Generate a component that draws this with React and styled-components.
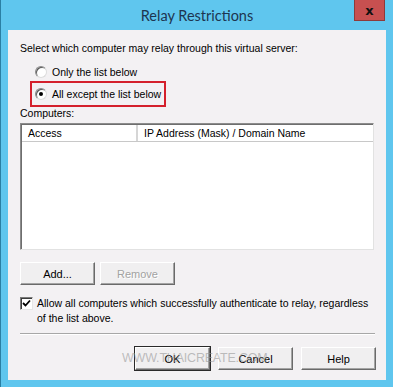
import React from 'react';
import styled, { createGlobalStyle } from 'styled-components';

const GlobalStyle = createGlobalStyle`
    html, body {
        margin: 0;
        padding: 0;
        background: #5fc6ee;
    }
`;

const UI_FONT = `"Liberation Sans", Arial, sans-serif`;

const Window = styled.div`
    width: 393px;
    height: 387px;
    box-sizing: border-box;
    background: #5fc6ee;
    border-left: 1px solid #2a7fa4;
    display: flex;
    flex-direction: column;
    font-family: ${UI_FONT};
    font-size: 10.5px;
    color: #000;
`;

const TitleBar = styled.div`
    position: relative;
    height: 30px;
    display: flex;
    align-items: center;
    justify-content: center;
    flex-shrink: 0;
`;

const Title = styled.span`
    font-family: Lato, "Open Sans", sans-serif;
    font-size: 14.5px;
    color: #1d3550;
    margin-top: 1px;
`;

const CloseButton = styled.div`
    position: absolute;
    top: -1px;
    right: 8px;
    width: 31px;
    height: 22px;
    box-sizing: border-box;
    background: #c75050;
    border: 1px solid #8e3a3a;
    display: flex;
    align-items: center;
    justify-content: center;
    font-family: "DejaVu Sans", sans-serif;
    font-weight: 700;
    font-size: 13px;
    color: #111;
    line-height: 1;
`;

const Client = styled.div`
    margin: 0 7px 7px 7px;
    height: 350px;
    box-sizing: border-box;
    background: #f3f1f3;
    padding: 11px 11px 0 12px;
    display: flex;
    flex-direction: column;
    position: relative;
`;

const Label = styled.div`
    line-height: 14px;
    white-space: nowrap;
    margin-top: ${(p) => p.$mt || 0}px;
`;

const RadioRow = styled.label`
    display: flex;
    align-items: center;
    gap: 5px;
    line-height: 14px;
    white-space: nowrap;
    margin-left: ${(p) => p.$indent || 0}px;
    margin-top: ${(p) => p.$mt || 0}px;
`;

const Radio = styled.span`
    flex: none;
    width: 12px;
    height: 12px;
    box-sizing: border-box;
    border-radius: 50%;
    border: 1px solid;
    border-color: #8a8a8a #dcdcdc #dcdcdc #8a8a8a;
    background: #fff;
    box-shadow: inset 1px 1px 0 #5a5a5a;
    display: flex;
    align-items: center;
    justify-content: center;
    &::after {
        content: '';
        width: 4px;
        height: 4px;
        border-radius: 50%;
        background: ${(p) => (p.$checked ? '#000' : 'transparent')};
    }
`;

const Highlight = styled.div`
    margin: 2px 0 0 10px;
    width: 136px;
    height: 26px;
    box-sizing: border-box;
    border: 2px solid #d4202c;
    padding: 4px 0 0 3px;
`;

const ListBox = styled.div`
    margin-top: 3px;
    width: 354px;
    height: 127px;
    box-sizing: border-box;
    background: #fff;
    border: 1px solid;
    border-color: #8c8c8c #e2e2e2 #e2e2e2 #8c8c8c;
    box-shadow: inset 1px 1px 0 #6e6e6e;
`;

const HeaderRow = styled.div`
    display: flex;
    height: 16px;
    border-bottom: 1px solid #c8c8c8;
    margin-left: 1px;
    margin-top: 1px;
`;

const HeaderCell = styled.div`
    width: ${(p) => (p.$w ? `${p.$w}px` : 'auto')};
    flex: ${(p) => (p.$w ? 'none' : 1)};
    box-sizing: border-box;
    padding-left: 6px;
    line-height: 16px;
    border-right: ${(p) => (p.$w ? '2px solid #d6d6d6' : 'none')};
`;

const ButtonRow = styled.div`
    display: flex;
    gap: ${(p) => p.$gap || 5}px;
    justify-content: ${(p) => (p.$end ? 'flex-end' : 'flex-start')};
    margin-top: ${(p) => p.$mt || 0}px;
    margin-right: ${(p) => p.$mr || 0}px;
`;

const Button = styled.div`
    width: 75px;
    height: 23px;
    box-sizing: border-box;
    background: #f0eff0;
    border: 1px solid;
    border-color: #ffffff #6a6a6a #6a6a6a #ffffff;
    box-shadow: inset -1px -1px 0 #a4a4a4, ${(p) => (p.$default ? '0 0 0 1px #2a2a2a' : '0 0 0 0 transparent')};
    display: flex;
    align-items: center;
    justify-content: center;
    font-size: 11px;
    color: ${(p) => (p.$disabled ? '#a2a2a2' : '#000')};
    text-shadow: ${(p) => (p.$disabled ? '1px 1px 0 #fff' : 'none')};
`;

const CheckRow = styled.div`
    display: flex;
    gap: 4px;
    margin-top: 11px;
    line-height: 15px;
`;

const CheckText = styled.span`
    width: 338px;
`;

const CheckBox = styled.span`
    flex: none;
    width: 13px;
    height: 13px;
    margin-top: 1px;
    box-sizing: border-box;
    background: #fff;
    border: 1px solid;
    border-color: #7a7a7a #e6e6e6 #e6e6e6 #7a7a7a;
    box-shadow: inset 1px 1px 0 #3c3c3c;
    display: flex;
    align-items: center;
    justify-content: center;
`;

const Separator = styled.div`
    margin-top: 7px;
    width: 355px;
    height: 1px;
    background: #a7a7a7;
    border-bottom: 1px solid #fff;
`;

const Watermark = styled.div`
    position: absolute;
    left: 114px;
    top: 321px;
    font-family: ${UI_FONT};
    font-size: 12.5px;
    letter-spacing: -0.2px;
    color: rgba(150, 150, 150, 0.6);
    pointer-events: none;
`;

const CheckMark = () => (
    <svg width="9" height="9" viewBox="0 0 9 9">
        <path d="M1 4 L3.5 6.5 L8 1.5" stroke="#000" strokeWidth="1.8" fill="none" />
    </svg>
);

const App = () => {
    return (
        <>
            <GlobalStyle />
            <Window>
                <TitleBar>
                    <Title>Relay Restrictions</Title>
                    <CloseButton>x</CloseButton>
                </TitleBar>
                <Client>
                    <Label>Select which computer may relay through this virtual server:</Label>
                    <RadioRow $indent={15} $mt={10}>
                        <Radio />
                        <span>Only the list below</span>
                    </RadioRow>
                    <Highlight>
                        <RadioRow>
                            <Radio $checked />
                            <span>All except the list below</span>
                        </RadioRow>
                    </Highlight>
                    <Label $mt={-1}>Computers:</Label>
                    <ListBox>
                        <HeaderRow>
                            <HeaderCell $w={116}>Access</HeaderCell>
                            <HeaderCell>IP Address (Mask) / Domain Name</HeaderCell>
                        </HeaderRow>
                    </ListBox>
                    <ButtonRow $mt={12}>
                        <Button>Add...</Button>
                        <Button $disabled>Remove</Button>
                    </ButtonRow>
                    <CheckRow>
                        <CheckBox><CheckMark /></CheckBox>
                        <CheckText>Allow all computers which successfully authenticate to relay, regardless of the list above.</CheckText>
                    </CheckRow>
                    <Separator />
                    <ButtonRow $end $gap={8} $mt={12} $mr={-1}>
                        <Button $default>OK</Button>
                        <Button>Cancel</Button>
                        <Button>Help</Button>
                    </ButtonRow>
                    <Watermark>WWW.THAICREATE.COM</Watermark>
                </Client>
            </Window>
        </>
    );
};

export default App;
